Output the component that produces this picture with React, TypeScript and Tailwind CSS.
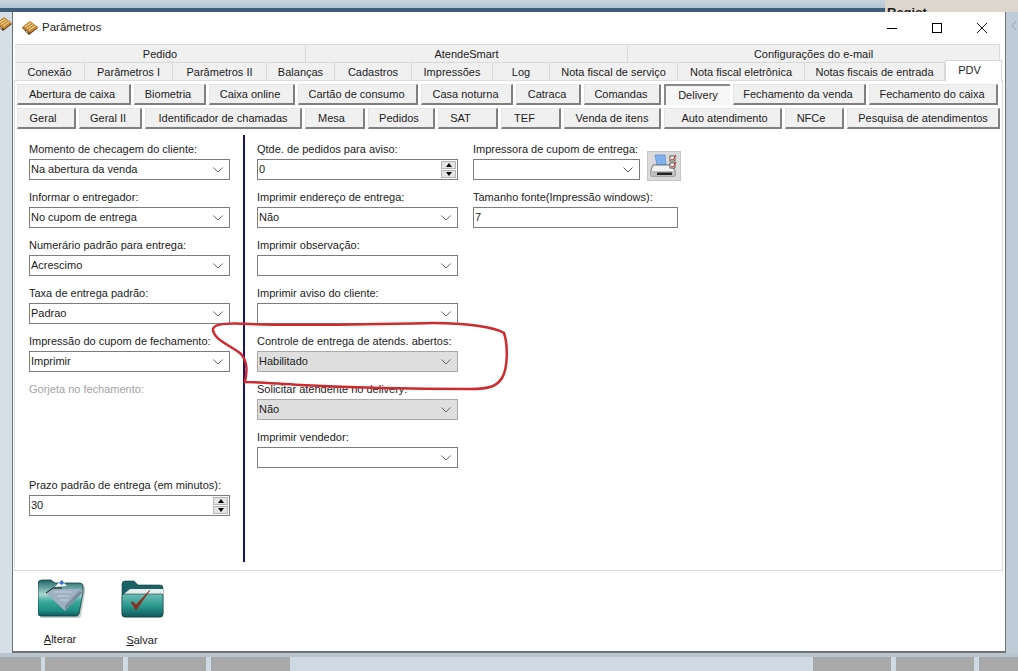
const tabsTop = [
  { label: "Pedido", w: "w-[291px]" },
  { label: "AtendeSmart", w: "w-[322px]" },
  { label: "Configurações do e-mail", w: "w-[372px]" },
];

const tabsBottom = [
  { label: "Conexão", w: "w-[70px]" },
  { label: "Parâmetros I", w: "w-[88px]" },
  { label: "Parâmetros II", w: "w-[94px]" },
  { label: "Balanças", w: "w-[68px]" },
  { label: "Cadastros", w: "w-[77px]" },
  { label: "Impressões", w: "w-[81px]" },
  { label: "Log", w: "w-[57px]" },
  { label: "Nota fiscal de serviço", w: "w-[128px]" },
  { label: "Nota fiscal eletrônica", w: "w-[127px]" },
  { label: "Notas fiscais de entrada", w: "w-[140px]" },
];

const buttonsOne = [
  { label: "Abertura de caixa", w: "w-[114px] pr-[3px]" },
  { label: "Biometria", w: "w-[72px] pr-[3px]" },
  { label: "Caixa online", w: "w-[86px] pr-[3px]" },
  { label: "Cartão de consumo", w: "w-[120px] pr-[2px]" },
  { label: "Casa noturna", w: "w-[92px] pr-[2px]" },
  { label: "Catraca", w: "w-[65px] pr-[2px]" },
  { label: "Comandas", w: "w-[77px] pr-[2px]" },
  { label: "Delivery", w: "w-[66px]", pressed: true },
  { label: "Fechamento da venda", w: "w-[133px] pr-[2px]" },
  { label: "Fechamento do caixa", w: "w-[129px] pr-[2px]" },
];

const buttonsTwo = [
  { label: "Geral", w: "w-[59px] pr-[6px]" },
  { label: "Geral II", w: "w-[63px] pr-[4px]" },
  { label: "Identificador de chamadas", w: "w-[157px]" },
  { label: "Mesa", w: "w-[60px] pr-[6px]" },
  { label: "Pedidos", w: "w-[67px] pr-[4px]" },
  { label: "SAT", w: "w-[60px] pr-[14px]" },
  { label: "TEF", w: "w-[60px] pr-[12px]" },
  { label: "Venda de itens", w: "w-[97px]" },
  { label: "Auto atendimento", w: "w-[118px] pl-[4px]" },
  { label: "NFCe", w: "w-[59px] pr-[6px]" },
  { label: "Pesquisa de atendimentos", w: "w-[153px]" },
];

function Chevron() {
  return (
    <svg width="10" height="6" viewBox="0 0 10 6" className="shrink-0">
      <path d="M0.5 0.5l4.5 4.5 4.5-4.5" fill="none" stroke="#666" strokeWidth="1" />
    </svg>
  );
}

function Chip({ className }: { className?: string }) {
  return (
    <svg width="16" height="14" viewBox="0 0 16 14" className={className}>
      <path d="M0 7l9-6 7 6-9 7z" fill="#5a3a18" />
      <path d="M0 6l8-6 8 6-8 6z" fill="#c98a34" />
      <path d="M3 6l6-4M5 7.5l6-4M7 9l6-4" stroke="#f7e3b0" strokeWidth="1" />
      <path d="M1 8l2 1.5M4 10l2 1.5" stroke="#d9c9a0" strokeWidth="1" />
    </svg>
  );
}

function Select({ value, disabled, w = "w-[201px]" }: { value?: string; disabled?: boolean; w?: string }) {
  return (
    <div
      className={`h-[21px] ${w} flex items-center justify-between pl-[1px] pr-[6px] border ${
        disabled ? "bg-[#dfdfdf] border-[#a8a8a8]" : "bg-white border-[#7c7c7c]"
      }`}
    >
      <span>{value}</span>
      <Chevron />
    </div>
  );
}

function Spin({ value }: { value: string }) {
  return (
    <div className="h-[21px] w-[201px] flex items-center justify-between pl-[1px] pr-[1px] bg-white border border-[#7c7c7c]">
      <span>{value}</span>
      <div className="w-[15px] h-[17px] flex flex-col gap-[1px]">
        <div className="flex-1 bg-[#e4e4e4] border border-[#b5b5b5] flex items-center justify-center">
          <div className="w-0 h-0 border-x-[3px] border-x-transparent border-b-[4px] border-b-black" />
        </div>
        <div className="flex-1 bg-[#e4e4e4] border border-[#b5b5b5] flex items-center justify-center">
          <div className="w-0 h-0 border-x-[3px] border-x-transparent border-t-[4px] border-t-black" />
        </div>
      </div>
    </div>
  );
}

function Label({ text, muted }: { text: string; muted?: boolean }) {
  return <div className={`h-[17px] leading-[14px] whitespace-nowrap ${muted ? "text-[#a3a3a3]" : ""}`}>{text}</div>;
}

function Field({ label, children }: { label: string; children: React.ReactNode }) {
  return (
    <div>
      <Label text={label} />
      {children}
    </div>
  );
}

function FolderAlterar() {
  return (
    <svg width="48" height="40" viewBox="0 0 48 40">
      <defs>
        <linearGradient id="fa" x1="0" y1="0" x2="0" y2="1">
          <stop offset="0" stopColor="#1d6567" />
          <stop offset="0.4" stopColor="#a9d6d0" />
          <stop offset="0.6" stopColor="#3aa99c" />
          <stop offset="0.85" stopColor="#1d8c84" />
          <stop offset="1" stopColor="#0e5a5b" />
        </linearGradient>
      </defs>
      <path d="M2 8q0-4 4-4h9l4 3h24q4 0 4 4v4l-4 23q-1 3-4 3H5q-3 0-3-3z" fill="#8a9a9a" opacity="0.5" />
      <path d="M0 6q0-4 4-4h9l4 3h24q4 0 4 3v6l-4 22q-1 2-3 2H3q-3 0-3-3z" fill="url(#fa)" stroke="#103f40" strokeWidth="0.8" />
      <path d="M17 9l6-7 6 6z" fill="#f2f5fa" />
      <path d="M21 5l3-3 2 3-2 2z" fill="#2f6fd0" />
      <path d="M8 15l7-4h26l4 3-18 19z" fill="#9fb0c2" />
      <path d="M8 15l7-5h9" fill="none" stroke="#111" strokeWidth="1" />
      <path d="M16 14h18M19 18h13M22 22h8" stroke="#c7d4e0" strokeWidth="1" />
      <path d="M27 33l18-19-4-1-14 15z" fill="#7a8ea2" />
    </svg>
  );
}

function FolderSalvar() {
  return (
    <svg width="43" height="38" viewBox="0 0 43 38">
      <defs>
        <linearGradient id="fs" x1="0" y1="0" x2="0" y2="1">
          <stop offset="0" stopColor="#6dbdb4" />
          <stop offset="0.5" stopColor="#2c9a90" />
          <stop offset="1" stopColor="#0f5a5c" />
        </linearGradient>
      </defs>
      <path d="M1 4q0-3 3-3h9l4 4h22q3 0 3 3v26q0 3-3 3H4q-3 0-3-3z" fill="#1c6264" stroke="#103f40" strokeWidth="0.6" />
      <path d="M3 14l6-5h33v5z" fill="#e6eeee" />
      <path d="M1 16q0-2 2-2h38q1 0 1 2v18q0 3-3 3H4q-3 0-3-3z" fill="url(#fs)" stroke="#103f40" strokeWidth="0.6" />
      <path d="M10 22l5 8L29 10 15 25l-3-3z" fill="#8f2a1c" stroke="#8f2a1c" strokeWidth="0.6" />
    </svg>
  );
}

function PrinterIcon() {
  return (
    <svg width="30" height="26" viewBox="0 0 30 26">
      <path d="M6 2h10l1 10H8z" fill="#7fb2ee" stroke="#4c7cc0" strokeWidth="0.6" />
      <path d="M4 12h18l4 6v5H2v-6z" fill="#f2f2f2" stroke="#555" strokeWidth="0.8" />
      <path d="M2 18h24v5H2z" fill="#bdbdbd" />
      <rect x="8" y="19.5" width="15" height="2.5" fill="#222" />
      <rect x="21" y="3" width="5" height="5" fill="#fff" stroke="#333" strokeWidth="0.8" />
      <rect x="21" y="10" width="5" height="5" fill="#fff" stroke="#333" strokeWidth="0.8" />
      <path d="M22 6l2 1 3-5M22 13l2 1 3-5" fill="none" stroke="#c8261c" strokeWidth="1" />
    </svg>
  );
}

export default function App() {
  return (
    <div className="w-[1018px] h-[671px] overflow-hidden relative flex flex-col bg-[#cfd9e3] text-[11px] text-[#1c1c1c] font-['Liberation_Sans',sans-serif]">
      {/* desktop behind the window, top edge */}
      <div className="h-[12px] flex shrink-0">
        <div className="flex-1 flex flex-col bg-gradient-to-b from-[#c9d5e0] to-[#a9bccc]">
          <div className="flex-1" />
          <div className="h-[4px] bg-[#3f5e7c]" />
        </div>
        <div className="w-[133px] bg-[#dcd6cc] overflow-hidden pl-[2px] pt-[6px] text-[13px] leading-[14px] font-bold text-[#222]">
          Regist
        </div>
      </div>

      <div className="flex-1 flex min-h-0">
        <div className="w-[12px] shrink-0 bg-[#d6dee7] overflow-hidden pt-[5px]">
          <Chip className="-ml-[4px]" />
        </div>

        {/* Parâmetros window */}
        <div className="w-[994px] shrink-0 bg-white border-x border-b-2 border-[#6f7376] flex flex-col">
          <div className="h-[32px] shrink-0 flex items-center pl-[9px]">
            <Chip />
            <span className="ml-[4px] text-[11.5px] text-[#222]">Parâmetros</span>
            <div className="ml-auto flex items-center">
              <div className="w-[10px] h-[1px] bg-black mr-[35px]" />
              <div className="w-[10px] h-[10px] border border-black mr-[34px]" />
              <svg width="12" height="12" viewBox="0 0 12 12" className="mr-[17px]">
                <path d="M1 1l10 10M11 1L1 11" stroke="#111" strokeWidth="1" />
              </svg>
            </div>
          </div>

          {/* main tabs */}
          <div className="shrink-0 pl-[2px]">
            <div className="flex h-[18px]">
              {tabsTop.map((t) => (
                <div key={t.label} className={`${t.w} pt-[1px] bg-[#f0f0f0] border-t border-r border-[#d9d9d9] flex items-center justify-center`}>
                  {t.label}
                </div>
              ))}
            </div>
            <div className="flex h-[18px] relative z-10">
              {tabsBottom.map((t) => (
                <div key={t.label} className={`${t.w} pt-[1px] bg-[#f0f0f0] border-t border-r border-[#d9d9d9] flex items-center justify-center`}>
                  {t.label}
                </div>
              ))}
              <div className="w-[57px] h-[22px] -mt-[2px] bg-white border-t border-x border-[#d9d9d9] flex items-center justify-center pb-[3px] pr-[8px]">
                PDV
              </div>
            </div>
          </div>

          {/* PDV panel */}
          <div className="flex-1 min-h-0 ml-[1px] mr-[2px] border border-[#dcdcdc] flex flex-col">
            <div className="pl-[2px] pt-[3px] flex flex-col gap-[3px]">
              <div className="flex gap-[3px]">
                {buttonsOne.map((b) => (
                  <div
                    key={b.label}
                    className={`${b.w} h-[21px] flex items-center justify-center ${
                      b.pressed
                        ? "bg-[#f7f7f7] border-t-2 border-l-2 border-[#8a8a8a]"
                        : "bg-[#f0f0f0] border-r-2 border-b-2 border-[#808080] border-t border-l border-t-[#e6e6e6] border-l-[#e6e6e6]"
                    }`}
                  >
                    {b.label}
                  </div>
                ))}
              </div>
              <div className="flex gap-[3px]">
                {buttonsTwo.map((b) => (
                  <div
                    key={b.label}
                    className={`${b.w} h-[21px] flex items-center justify-center bg-[#f0f0f0] border-r-2 border-b-2 border-[#808080] border-t border-l border-t-[#e6e6e6] border-l-[#e6e6e6]`}
                  >
                    {b.label}
                  </div>
                ))}
              </div>
            </div>

            <div className="flex mt-[6px] h-[427px]">
              <div className="w-[228px] pl-[14px] pt-[7px] flex flex-col gap-[10px] shrink-0">
                <Field label="Momento de checagem do cliente:"><Select value="Na abertura da venda" /></Field>
                <Field label="Informar o entregador:"><Select value="No cupom de entrega" /></Field>
                <Field label="Numerário padrão para entrega:"><Select value="Acrescimo" /></Field>
                <Field label="Taxa de entrega padrão:"><Select value="Padrao" /></Field>
                <Field label="Impressão do cupom de fechamento:"><Select value="Imprimir" /></Field>
                <Label text="Gorjeta no fechamento:" muted />
                <div className="mt-[69px]">
                  <Field label="Prazo padrão de entrega (em minutos):"><Spin value="30" /></Field>
                </div>
              </div>
              <div className="w-[2px] bg-[#15156e] shrink-0" />
              <div className="w-[228px] pl-[12px] pt-[7px] flex flex-col gap-[10px] shrink-0">
                <Field label="Qtde. de pedidos para aviso:"><Spin value="0" /></Field>
                <Field label="Imprimir endereço de entrega:"><Select value="Não" /></Field>
                <Field label="Imprimir observação:"><Select /></Field>
                <Field label="Imprimir aviso do cliente:"><Select /></Field>
                <Field label="Controle de entrega de atends. abertos:"><Select value="Habilitado" disabled /></Field>
                <Field label="Solicitar atendente no delivery:"><Select value="Não" disabled /></Field>
                <Field label="Imprimir vendedor:"><Select /></Field>
              </div>
              <div className="pt-[7px] flex flex-col gap-[10px]">
                <div className="flex items-end">
                  <Field label="Impressora de cupom de entrega:"><Select w="w-[167px]" /></Field>
                  <div className="ml-[7px] w-[34px] h-[30px] mb-[-1px] bg-[#dadada] border border-[#c4c4c4] flex items-center justify-center">
                    <PrinterIcon />
                  </div>
                </div>
                <Field label="Tamanho fonte(Impressão windows):">
                  <div className="h-[21px] w-[205px] flex items-center pl-[1px] border border-[#7c7c7c]">7</div>
                </Field>
              </div>
            </div>
          </div>

          {/* action bar */}
          <div className="h-[80px] shrink-0 flex pl-[17px] pt-[7px] gap-[22px]">
            <div className="w-[60px] flex flex-col items-center">
              <div className="ml-[3px]">
                <FolderAlterar />
              </div>
              <span className="mt-[13px]"><u>A</u>lterar</span>
            </div>
            <div className="w-[60px] flex flex-col items-center pt-[2px]">
              <FolderSalvar />
              <span className="mt-[14px]"><u>S</u>alvar</span>
            </div>
          </div>
        </div>

        <div className="flex-1 bg-[#bfcbd6] pt-[9px] pl-[5px]">
          <svg width="6" height="9" viewBox="0 0 6 9">
            <path d="M5 0L1 4.5 5 9" fill="none" stroke="#97a3ae" strokeWidth="1" />
          </svg>
        </div>
      </div>

      {/* taskbar strip behind the window */}
      <div className="h-[18px] shrink-0 flex flex-col">
        <div className="h-[4px] bg-[#b9c4cf]" />
        <div className="flex-1 flex">
          <div className="w-[41px] bg-[#a9a9a9]" />
          <div className="w-[4px]" />
          <div className="w-[78px] bg-[#a9a9a9]" />
          <div className="w-[5px]" />
          <div className="w-[78px] bg-[#a9a9a9]" />
          <div className="w-[5px]" />
          <div className="w-[79px] bg-[#a9a9a9]" />
          <div className="flex-1" />
          <div className="w-[78px] bg-[#a9a9a9]" />
          <div className="w-[5px]" />
          <div className="w-[78px] bg-[#a9a9a9]" />
          <div className="w-[5px]" />
          <div className="w-[39px] bg-[#a9a9a9]" />
        </div>
      </div>

      {/* red marker drawn over the screenshot */}
      <svg className="absolute left-0 top-0 pointer-events-none" width="1018" height="671" viewBox="0 0 1018 671">
        <path
          d="M213 329C214 323 232 323 250 324C300 326 380 324 433 323C465 323 495 327 504 333C508 345 508 368 502 378C497 386 490 389 470 389C420 389 360 388 300 385C280 384 260 382 245 382C247 372 248 362 241 354C232 346 213 340 213 329Z"
          fill="none"
          stroke="#cf2a2e"
          strokeWidth="2.5"
        />
      </svg>
    </div>
  );
}
